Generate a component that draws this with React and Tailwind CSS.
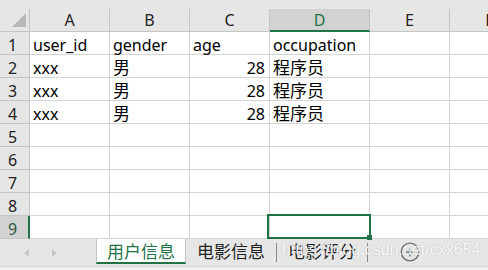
import React from 'react';

const widths = ['w-[80px]', 'w-[80px]', 'w-[80px]', 'w-[100px]', 'w-[80px]', 'w-[80px]'];
const letters = ['A', 'B', 'C', 'D', 'E', 'F'];

const rowData = [
  [{ t: 'user_id' }, { t: 'gender' }, { t: 'age' }, { t: 'occupation' }],
  [{ t: 'xxx' }, { t: '男', cjk: true }, { t: '28', r: true }, { t: '程序员', cjk: true }],
  [{ t: 'xxx' }, { t: '男', cjk: true }, { t: '28', r: true }, { t: '程序员', cjk: true }],
  [{ t: 'xxx' }, { t: '男', cjk: true }, { t: '28', r: true }, { t: '程序员', cjk: true }],
  [], [], [], [], [],
];

function Cell({ w, c }) {
  const right = c && c.r;
  return (
    <div
      className={`${w} shrink-0 h-[23px] border-r border-b border-[#d4d4d4] bg-white pt-[3px] leading-[20px] text-[16px] text-black whitespace-nowrap ${right ? 'text-right pr-[4px] pl-[3px]' : 'pl-[3px]'}`}
    >
      {c ? (c.cjk ? <span className="text-[17px]">{c.t}</span> : c.t) : null}
    </div>
  );
}

export default function App() {
  return (
    <div className="relative w-[488px] h-[270px] overflow-hidden bg-[#e6e6e6] font-['Noto_Sans','Noto_Sans_CJK_SC',sans-serif]">
      <div className="h-[9px] bg-[#e6e6e6]" />
      {/* header row */}
      <div className="flex h-[23px]">
        <div className="w-[30px] shrink-0 h-[23px] border-r border-b border-[#c4c4c4] bg-[#e6e6e6]">
          <svg width="29" height="22" className="block">
            <polygon points="26,4 26,18 12,18" fill="#b9b9b9" />
          </svg>
        </div>
        {letters.map((l, i) =>
          l === 'D' ? (
            <div
              key={l}
              className={`${widths[i]} shrink-0 h-[23px] border-r border-[#c4c4c4] border-b-2 border-b-[#217346] bg-[#d2d2d2] text-center leading-[22px] text-[16px] text-[#217346]`}
            >
              {l}
            </div>
          ) : (
            <div
              key={l}
              className={`${widths[i]} shrink-0 h-[23px] border-r border-b border-[#c4c4c4] bg-[#e6e6e6] text-center leading-[22px] text-[16px] text-[#222]`}
            >
              {l}
            </div>
          )
        )}
      </div>
      {/* data rows */}
      {rowData.map((row, ri) => (
        <div key={ri} className="flex h-[23px]">
          {ri === 8 ? (
            <div className="w-[30px] shrink-0 h-[23px] border-b border-[#c4c4c4] border-r-2 border-r-[#217346] bg-[#d2d2d2] text-center pr-[3px] pt-[3px] leading-[20px] text-[16px] text-[#2d5a3e]">
              {ri + 1}
            </div>
          ) : (
            <div className="w-[30px] shrink-0 h-[23px] border-r border-b border-[#c4c4c4] bg-[#e6e6e6] text-center pr-[4px] pt-[3px] leading-[20px] text-[16px] text-[#222]">
              {ri + 1}
            </div>
          )}
          {widths.map((w, ci) => (
            <Cell key={ci} w={w} c={row[ci]} />
          ))}
        </div>
      ))}

      {/* selection box */}
      <div className="absolute left-[267px] top-[214px] w-[104px] h-[25px] border-2 border-[#217346]" />
      <div className="absolute left-[367px] top-[235px] w-[5px] h-[5px] bg-[#217346]" />

      {/* tab bar */}
      <div className="flex h-[28px] border-b border-[#d6d6d6] bg-[#e6e6e6] font-['Noto_Sans_CJK_SC',sans-serif]">
        <div className="w-[96px] shrink-0 flex items-start pt-[10px]">
          <svg width="6" height="9" className="ml-[24px] block">
            <polygon points="5,0 5,8 0,4" fill="#c6c6c6" />
          </svg>
          <svg width="6" height="9" className="ml-[22px] block">
            <polygon points="0,0 0,8 5,4" fill="#c6c6c6" />
          </svg>
        </div>
        <div className="h-[25px] shrink-0 bg-white border-l border-r border-[#c4c4c4] border-b-2 border-b-[#217346] px-[10px] leading-[23px] text-[17px] text-[#217346]">
          用户信息
        </div>
        <div className="h-[25px] shrink-0 px-[11px] leading-[23px] text-[17px] text-[#222]">电影信息</div>
        <div className="w-px h-[19px] mt-[4px] bg-[#8a8a8a] shrink-0" />
        <div className="h-[25px] shrink-0 px-[11px] leading-[23px] text-[17px] text-[#222]">电影评分</div>
        <div className="w-px h-[19px] mt-[4px] bg-[#8a8a8a] shrink-0" />
        <div className="ml-[32px] mt-[3px] shrink-0">
          <svg width="20" height="20" viewBox="0 0 20 20" className="block">
            <circle cx="10" cy="10" r="8.8" fill="none" stroke="#6e6e6e" strokeWidth="1.3" />
            <line x1="10" y1="5.5" x2="10" y2="14.5" stroke="#6e6e6e" strokeWidth="1.3" />
            <line x1="5.5" y1="10" x2="14.5" y2="10" stroke="#6e6e6e" strokeWidth="1.3" />
          </svg>
        </div>
      </div>
      <div className="h-[3px] bg-[#f0f0f0]" />

      {/* watermark */}
      <div className="absolute left-[282px] top-[242px] font-['Liberation_Sans',sans-serif] text-[16px] leading-[16px] text-[rgba(255,255,255,0.9)] [text-shadow:0_0_1.5px_rgba(0,0,0,0.22)] whitespace-nowrap">
        https://blog.csdn.net/cxx654
      </div>
    </div>
  );
}
